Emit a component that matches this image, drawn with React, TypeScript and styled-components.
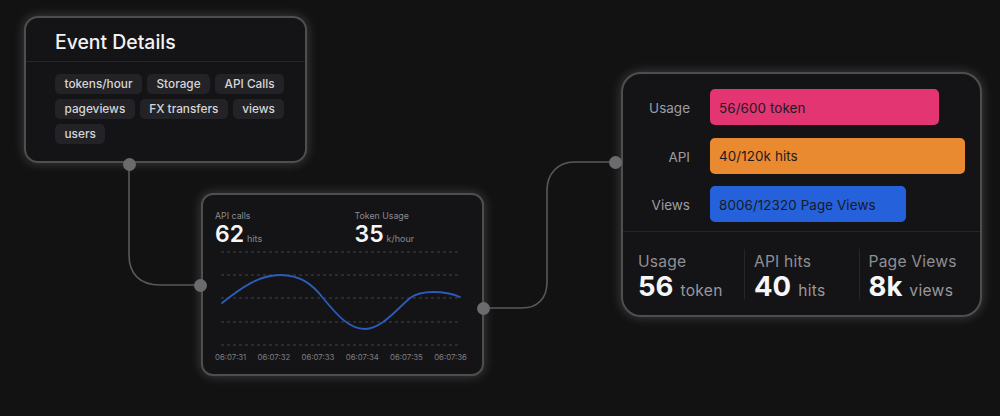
import React from 'react'
import styled, { createGlobalStyle } from 'styled-components'

const GlobalStyle = createGlobalStyle`
  html, body {
    margin: 0;
    padding: 0;
    background: #121213;
    font-family: Inter, "Liberation Sans", sans-serif;
  }
`

const Canvas = styled.div`
  position: relative;
  width: 1000px;
  height: 416px;
  overflow: hidden;
  background: #121213;
`

const Wires = styled.svg`
  position: absolute;
  inset: 0;
  width: 1000px;
  height: 416px;
`

const Node = styled.section<{ $x: number; $y: number; $w: number; $h: number; $radius: number }>`
  position: absolute;
  box-sizing: border-box;
  left: ${p => p.$x}px;
  top: ${p => p.$y}px;
  width: ${p => p.$w}px;
  height: ${p => p.$h}px;
  border-radius: ${p => p.$radius}px;
  border: 2px solid #4e4e50;
  background: #141417;
  box-shadow: 0 0 12px rgba(255, 255, 255, 0.2);
`

const Dot = styled.span<{ $x: number; $y: number }>`
  position: absolute;
  left: ${p => p.$x - 6.5}px;
  top: ${p => p.$y - 6.5}px;
  width: 13px;
  height: 13px;
  border-radius: 50%;
  background: #6b6b6d;
`

/* event details */
const DetailsHeader = styled.header`
  height: 44px;
  box-sizing: border-box;
  padding: 4px 0 0 29px;
  display: flex;
  align-items: center;
  border-bottom: 1px solid #26262a;
  font-size: 19.4px;
  font-weight: 500;
  color: #f2f2f3;
`

const TagList = styled.div`
  display: flex;
  flex-wrap: wrap;
  gap: 5px;
  padding: 12px 15px 0 29px;
`

const Tag = styled.span`
  height: 20px;
  padding: 0 9.5px;
  display: flex;
  align-items: center;
  border-radius: 5px;
  background: #232327;
  font-size: 11.8px;
  font-weight: 500;
  color: #d6d6d8;
`

/* chart card */
const ChartCard = styled.div`
  height: 100%;
  box-sizing: border-box;
  padding: 15px 12px 0;
  display: flex;
  flex-direction: column;
`

const Metrics = styled.div`
  display: grid;
  grid-template-columns: 139.5px 1fr;
  height: 41px;
`

const MetricLabel = styled.div`
  font-size: 8.8px;
  line-height: 11px;
  color: #8b8b8f;
`

const MetricValue = styled.div`
  display: flex;
  align-items: baseline;
  gap: 3px;
  font-size: 23px;
  line-height: 27px;
  font-weight: 600;
  color: #f6f6f7;
`

const MetricUnit = styled.span`
  font-size: 9px;
  font-weight: 400;
  color: #8b8b8f;
`

const Plot = styled.svg`
  display: block;
  width: 254px;
  height: 101px;
`

const TimeAxis = styled.div`
  width: 252px;
  display: flex;
  justify-content: space-between;
  font-size: 7.8px;
  line-height: 10px;
  color: #7e7e82;
`

/* usage card */
const UsageCard = styled.div`
  height: 100%;
  display: flex;
  flex-direction: column;
`

const BarRows = styled.div`
  height: 158px;
  box-sizing: border-box;
  padding-top: 15px;
  display: flex;
  flex-direction: column;
  gap: 12.5px;
  border-bottom: 1px solid #26262a;
`

const BarRow = styled.div`
  display: flex;
  align-items: center;
  height: 36px;
`

const BarLabel = styled.span`
  width: 67px;
  margin-right: 20px;
  padding-top: 2px;
  text-align: right;
  font-size: 13.5px;
  color: #9d9da1;
`

const Bar = styled.div<{ $w: number; $color: string }>`
  width: ${p => p.$w}px;
  height: 36px;
  box-sizing: border-box;
  padding: 1px 0 0 9px;
  display: flex;
  align-items: center;
  border-radius: 5px;
  background: ${p => p.$color};
  font-size: 13.4px;
  letter-spacing: 0.1px;
  color: #1a1a22;
`

const Stats = styled.div`
  display: flex;
  padding: 17px 0 0 15px;
`

const Stat = styled.div<{ $w: number; $divided?: boolean }>`
  width: ${p => p.$w}px;
  box-sizing: border-box;
  height: 50px;
  padding: 3px 0 0 ${p => (p.$divided ? 9 : 0)}px;
  border-left: ${p => (p.$divided ? '1px solid #26262a' : 'none')};
`

const StatLabel = styled.div`
  font-size: 15.6px;
  line-height: 20px;
  letter-spacing: 0.2px;
  color: #8f8f93;
`

const StatValue = styled.div`
  display: flex;
  align-items: baseline;
  gap: 7px;
  font-size: 27.5px;
  line-height: 29px;
  font-weight: 700;
  color: #f6f6f7;
`

const StatUnit = styled.span`
  font-size: 15.6px;
  font-weight: 400;
  letter-spacing: 0.3px;
  color: #98989c;
`

const tags = ['tokens/hour', 'Storage', 'API Calls', 'pageviews', 'FX transfers', 'views', 'users']
const times = ['06:07:31', '06:07:32', '06:07:33', '06:07:34', '06:07:35', '06:07:36']
const gridLines = [1, 24, 47, 71, 94]

const bars = [
  { label: 'Usage', text: '56/600 token', w: 229, color: '#e33571' },
  { label: 'API', text: '40/120k hits', w: 255, color: '#ea8a30' },
  { label: 'Views', text: '8006/12320 Page Views', w: 196, color: '#2461da' },
]

const stats = [
  { label: 'Usage', value: '56', unit: 'token', w: 106 },
  { label: 'API hits', value: '40', unit: 'hits', w: 114.5 },
  { label: 'Page Views', value: '8k', unit: 'views', w: 115 },
]

export default function App() {
  return (
    <Canvas>
      <GlobalStyle />
      <Node $x={24} $y={16} $w={283} $h={147} $radius={14}>
        <DetailsHeader>Event Details</DetailsHeader>
        <TagList>
          {tags.map(t => (
            <Tag key={t}>{t}</Tag>
          ))}
        </TagList>
      </Node>

      <Node $x={201} $y={193} $w={283} $h={183} $radius={12}>
        <ChartCard>
          <Metrics>
            <div>
              <MetricLabel>API calls</MetricLabel>
              <MetricValue>
                62 <MetricUnit>hits</MetricUnit>
              </MetricValue>
            </div>
            <div>
              <MetricLabel>Token Usage</MetricLabel>
              <MetricValue>
                35 <MetricUnit>k/hour</MetricUnit>
              </MetricValue>
            </div>
          </Metrics>
          <Plot viewBox="0 0 254 101">
            {gridLines.map(y => (
              <line key={y} x1="6" x2="246" y1={y} y2={y} stroke="#434346" strokeWidth="1" strokeDasharray="3 3" />
            ))}
            <path
              d="M7 52 C 26 37, 44 24, 65 24 C 86 24, 98 34, 108 47 C 122 64, 134 78, 150 78 C 166 78, 180 60, 195 47 C 202 42, 210 41, 218 41 C 228 41, 238 43, 245 46"
              fill="none"
              stroke="#2b5cb8"
              strokeWidth="1.8"
              strokeLinecap="round"
            />
          </Plot>
          <TimeAxis>
            {times.map(t => (
              <span key={t}>{t}</span>
            ))}
          </TimeAxis>
        </ChartCard>
      </Node>

      <Node $x={621} $y={72} $w={361} $h={245} $radius={20}>
        <UsageCard>
          <BarRows>
            {bars.map(b => (
              <BarRow key={b.label}>
                <BarLabel>{b.label}</BarLabel>
                <Bar $w={b.w} $color={b.color}>
                  {b.text}
                </Bar>
              </BarRow>
            ))}
          </BarRows>
          <Stats>
            {stats.map((s, i) => (
              <Stat key={s.label} $w={s.w} $divided={i > 0}>
                <StatLabel>{s.label}</StatLabel>
                <StatValue>
                  {s.value} <StatUnit>{s.unit}</StatUnit>
                </StatValue>
              </Stat>
            ))}
          </Stats>
        </UsageCard>
      </Node>

      <Wires viewBox="0 0 1000 416">
        <path d="M129 164 V 255 C 129 274, 140 285, 160 285 H 200" fill="none" stroke="#59595b" strokeWidth="1.6" />
        <path
          d="M484 308 H 522 C 538 308, 547 298, 547 282 V 190 C 547 174, 558 162, 574 162 H 615"
          fill="none"
          stroke="#59595b"
          strokeWidth="1.6"
        />
      </Wires>
      <Dot $x={129} $y={164} />
      <Dot $x={200} $y={285} />
      <Dot $x={483} $y={308} />
      <Dot $x={615} $y={162} />
    </Canvas>
  )
}
